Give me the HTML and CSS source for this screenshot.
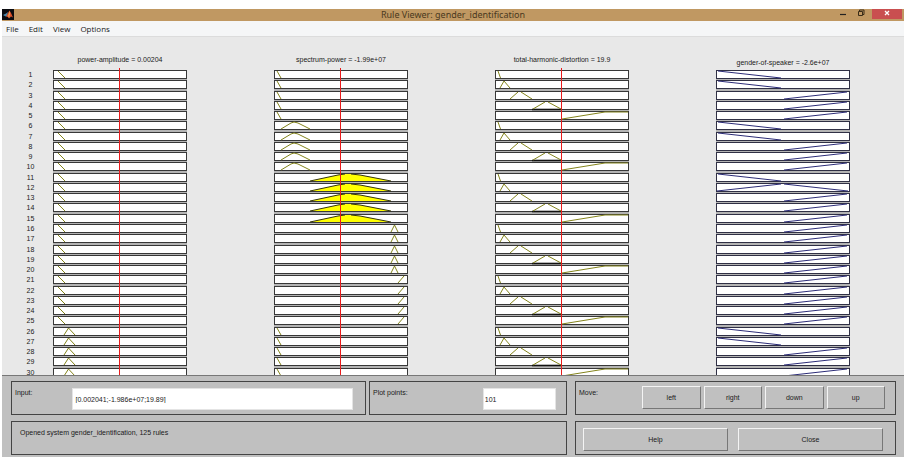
FILE: index.html
```html
<!DOCTYPE html>
<html lang="en">
<head>
<meta charset="utf-8">
<title>Rule Viewer: gender_identification</title>
<link rel="stylesheet" href="styles.css">
</head>
<body>
<div class="window">
  <header class="titlebar">
    <svg class="logo" viewBox="0 0 12 11" aria-hidden="true">
      <rect width="12" height="11" fill="#0c0c10"/>
      <path d="M1 6 L4 4.5 L6 3 L5 7 L3.5 7.5 Z" fill="#4a86a8"/>
      <path d="M4 7.5 L6 4 L7.5 1.5 L9 4 L11 8.5 L9 7.5 L7 9.5 L6 8 Z" fill="#d9522a"/>
      <path d="M7.5 1.5 L8 5 L7 9 L6.2 7 Z" fill="#f2a65a"/>
    </svg>
    <h1 class="title">Rule Viewer: gender_identification</h1>
    <div class="controls">
      <button class="control" aria-label="Minimize"><svg viewBox="0 0 8 8"><path d="M1 5.5h6" stroke="#222" stroke-width="1.2" fill="none"/></svg></button>
      <button class="control" aria-label="Restore"><svg viewBox="0 0 8 8"><path d="M1.5 2.5h4v4h-4zM2.5 2.5V1h4.5v4.5H5.5" stroke="#3a2c18" fill="none"/></svg></button>
      <button class="control close" aria-label="Close window"><svg viewBox="0 0 8 8"><path d="M2 2l4 4M6 2l-4 4" stroke="#fff" stroke-width="1.3" fill="none"/></svg></button>
    </div>
  </header>
  <nav class="menubar">
    <button>File</button><button>Edit</button><button>View</button><button>Options</button>
  </nav>
  <main class="plot">
    <ol class="numbers" id="numbers"></ol>
    <div class="charts">
      <figure><figcaption>power-amplitude = 0.00204</figcaption><svg class="chart" data-kind="power"></svg></figure>
      <figure><figcaption>spectrum-power = -1.99e+07</figcaption><svg class="chart" data-kind="spectrum"></svg></figure>
      <figure><figcaption>total-harmonic-distortion = 19.9</figcaption><svg class="chart" data-kind="distortion"></svg></figure>
      <figure class="output"><figcaption>gender-of-speaker = -2.6e+07</figcaption><svg class="chart" data-kind="gender"></svg></figure>
    </div>
  </main>
  <footer class="panel">
    <div class="left">
      <div class="fields">
        <div class="frame field input-field"><label for="input">Input:</label><input id="input" type="text" value="[0.002041;-1.986e+07;19.89]"></div>
        <div class="frame field points-field"><label for="points">Plot points:</label><input id="points" type="text" value="101"></div>
      </div>
      <p class="frame status">Opened system gender_identification, 125 rules</p>
    </div>
    <div class="right">
      <div class="frame move"><span class="move-label">Move:</span><button>left</button><button>right</button><button>down</button><button>up</button></div>
      <div class="frame actions"><button>Help</button><button>Close</button></div>
    </div>
  </footer>
</div>
<script src="charts.js"></script>
</body>
</html>
```
FILE: styles.css
```css
* { box-sizing: border-box; }

body {
  margin: 0;
  height: 100vh;
  padding: 9px 2px 3px;
  background: #fff;
  color: #1a1a1a;
  font: 7px/10px "Liberation Sans", Arial, sans-serif;
}

button, input { font: inherit; color: inherit; }

button {
  margin: 0;
  padding: 0;
  border: 0;
  background: none;
}

.window {
  display: flex;
  flex-direction: column;
  height: 100%;
}

.titlebar {
  display: grid;
  grid-template-columns: 1fr auto 1fr;
  height: 12px;
  background: #c09862;
}

.logo { width: 12px; height: 11px; }

.title {
  margin: 0;
  font: 9px/12px "Noto Sans", "Open Sans", sans-serif;
  color: #4a3820;
}

.controls {
  display: flex;
  justify-content: flex-end;
  align-items: flex-start;
}

.control {
  display: flex;
  justify-content: center;
  width: 18px;
  height: 10px;
}

.control svg { width: 8px; height: 8px; }
.control.close { width: 30px; background: #c94f50; margin: 0 2px; }

.menubar {
  display: flex;
  gap: 10px;
  height: 16px;
  padding-left: 4px;
  background: #f5f6f7;
  border-bottom: 1px solid #dcdcdc;
  font: 8px/16px "Open Sans", sans-serif;
}

.plot {
  display: flex;
  flex: 1;
  min-height: 0;
  overflow: hidden;
  padding: 18px 54px 0 0;
  background: #e8e8e8;
}

.numbers {
  display: grid;
  grid-template-rows: repeat(30, 1fr);
  flex: none;
  width: 51px;
  height: 308px;
  margin: 15px 0 0;
  padding: 0 0 0 6px;
  list-style: none;
  text-align: center;
}

.charts {
  display: grid;
  grid-template-columns: repeat(4, 1fr);
  gap: 87px;
  flex: 1;
}

figure { margin: 0; }

figcaption {
  height: 13px;
  text-align: center;
  white-space: nowrap;
}

.output figcaption { padding-top: 3px; }

.chart {
  display: block;
  width: 100%;
  height: 311px;
}

.panel {
  display: flex;
  gap: 8px;
  padding: 5px 8px 2px 9px;
  background: #c0c0c0;
  border-top: 1px solid #777;
}

.left { flex: 556; }
.right { flex: 321; }

.left, .right {
  display: flex;
  flex-direction: column;
  gap: 6px;
}

.frame {
  height: 34px;
  margin: 0;
  border: 1px solid #444;
}

.fields {
  display: grid;
  grid-template-columns: 355fr 198fr;
  gap: 3px;
}

.field {
  display: flex;
  align-items: flex-start;
  padding: 6px 12px 0 3px;
}

.field label { flex: 1; }

.field input {
  height: 22px;
  border: 1px solid #e4e4e4;
  background: #fff;
}

.input-field input { width: 83%; padding: 0 2px; }
.points-field { padding-right: 10px; }
.points-field input { width: 40%; padding: 0 1px; }

.status { padding: 6px 8px; }

.move {
  display: flex;
  gap: 3px;
  padding: 4px 10px 0 3px;
}

.move-label { width: 60px; padding-top: 2px; }

.move button, .actions button {
  flex: 1;
  height: 23px;
  border: 1px solid;
  border-color: #f4f4f4 #777 #777 #f4f4f4;
  background: #c0c0c0;
}

.actions {
  display: flex;
  gap: 10px;
  padding: 6px 12px 0 7px;
}
```
FILE: charts.js
```js
const ROWS = 30;
const PITCH = 308 / ROWS;
const OLIVE = '#84841c';
const NAVY = '#2c2c78';

// Each function returns the membership curves of one rule, in the box's own units (134 x 9).
const curves = {
  power(n) {
    return line(n <= 25 ? 'M5 1L12 8' : 'M11 8L15.5 1L22 8');
  },
  spectrum(n) {
    const group = Math.floor((n - 1) / 5);
    if (group === 2) {
      return '<path d="M36 8L64 2Q74 0 86 2L117 8Z" fill="#ffff00" stroke="none"/>' +
        line('M36 8L64 2L71 1M77 1L86 2L117 8', '#33330c');
    }
    return line({
      0: 'M3 1L7 8',
      1: 'M7 8L17 2L20 1L24 2L36 8',
      3: 'M117 8L120.5 1L124 8',
      4: 'M124 8L130 1',
      5: 'M3 1L7 8'
    }[group]);
  },
  distortion(n) {
    const i = (n - 1) % 5;
    const base = i === 3 ? '<path d="M37 8.5H66" stroke="#111" stroke-width="1.6"/>' : '';
    return base + line([
      'M3 1L5.5 8',
      'M5 8L9 1L15 8',
      'M15 8L23 1M26 1L37 8',
      'M38 8L50 1M53 1L66 8',
      'M67 8L110 1H133'
    ][i]);
  },
  gender(n) {
    if (n === 12) return line('M1 8L65 1M68 1L132 8', NAVY);
    return line([1, 2, 6, 7, 11, 26, 27].includes(n) ? 'M2 1L65 8' : 'M68 8L131 1', NAVY);
  }
};

function line(d, color = OLIVE) {
  return `<path d="${d}" fill="none" stroke="${color}"/>`;
}

document.querySelectorAll('.chart').forEach(svg => {
  const kind = svg.dataset.kind;
  const isOutput = kind === 'gender';
  const edge = isOutput ? '#303045' : '#383838';
  svg.setAttribute('viewBox', '0 0 134 311');
  svg.setAttribute('preserveAspectRatio', 'none');
  let html = '<rect y="3" width="134" height="308" fill="#b4b4b4"/>';
  for (let n = 1; n <= ROWS; n++) {
    const y = 2 + Math.round((n - 1) * PITCH);
    html += `<g transform="translate(0 ${y})">` +
      `<rect x=".5" y=".5" width="133" height="8" fill="#fff" stroke="${edge}"/>` +
      curves[kind](n) + '</g>';
  }
  if (!isOutput) html += '<path d="M66.5 0V311" stroke="#e81c1c"/>';
  svg.innerHTML = html;
});

const numbers = document.getElementById('numbers');
for (let n = 1; n <= ROWS; n++) {
  const item = document.createElement('li');
  item.textContent = n;
  numbers.append(item);
}
```
